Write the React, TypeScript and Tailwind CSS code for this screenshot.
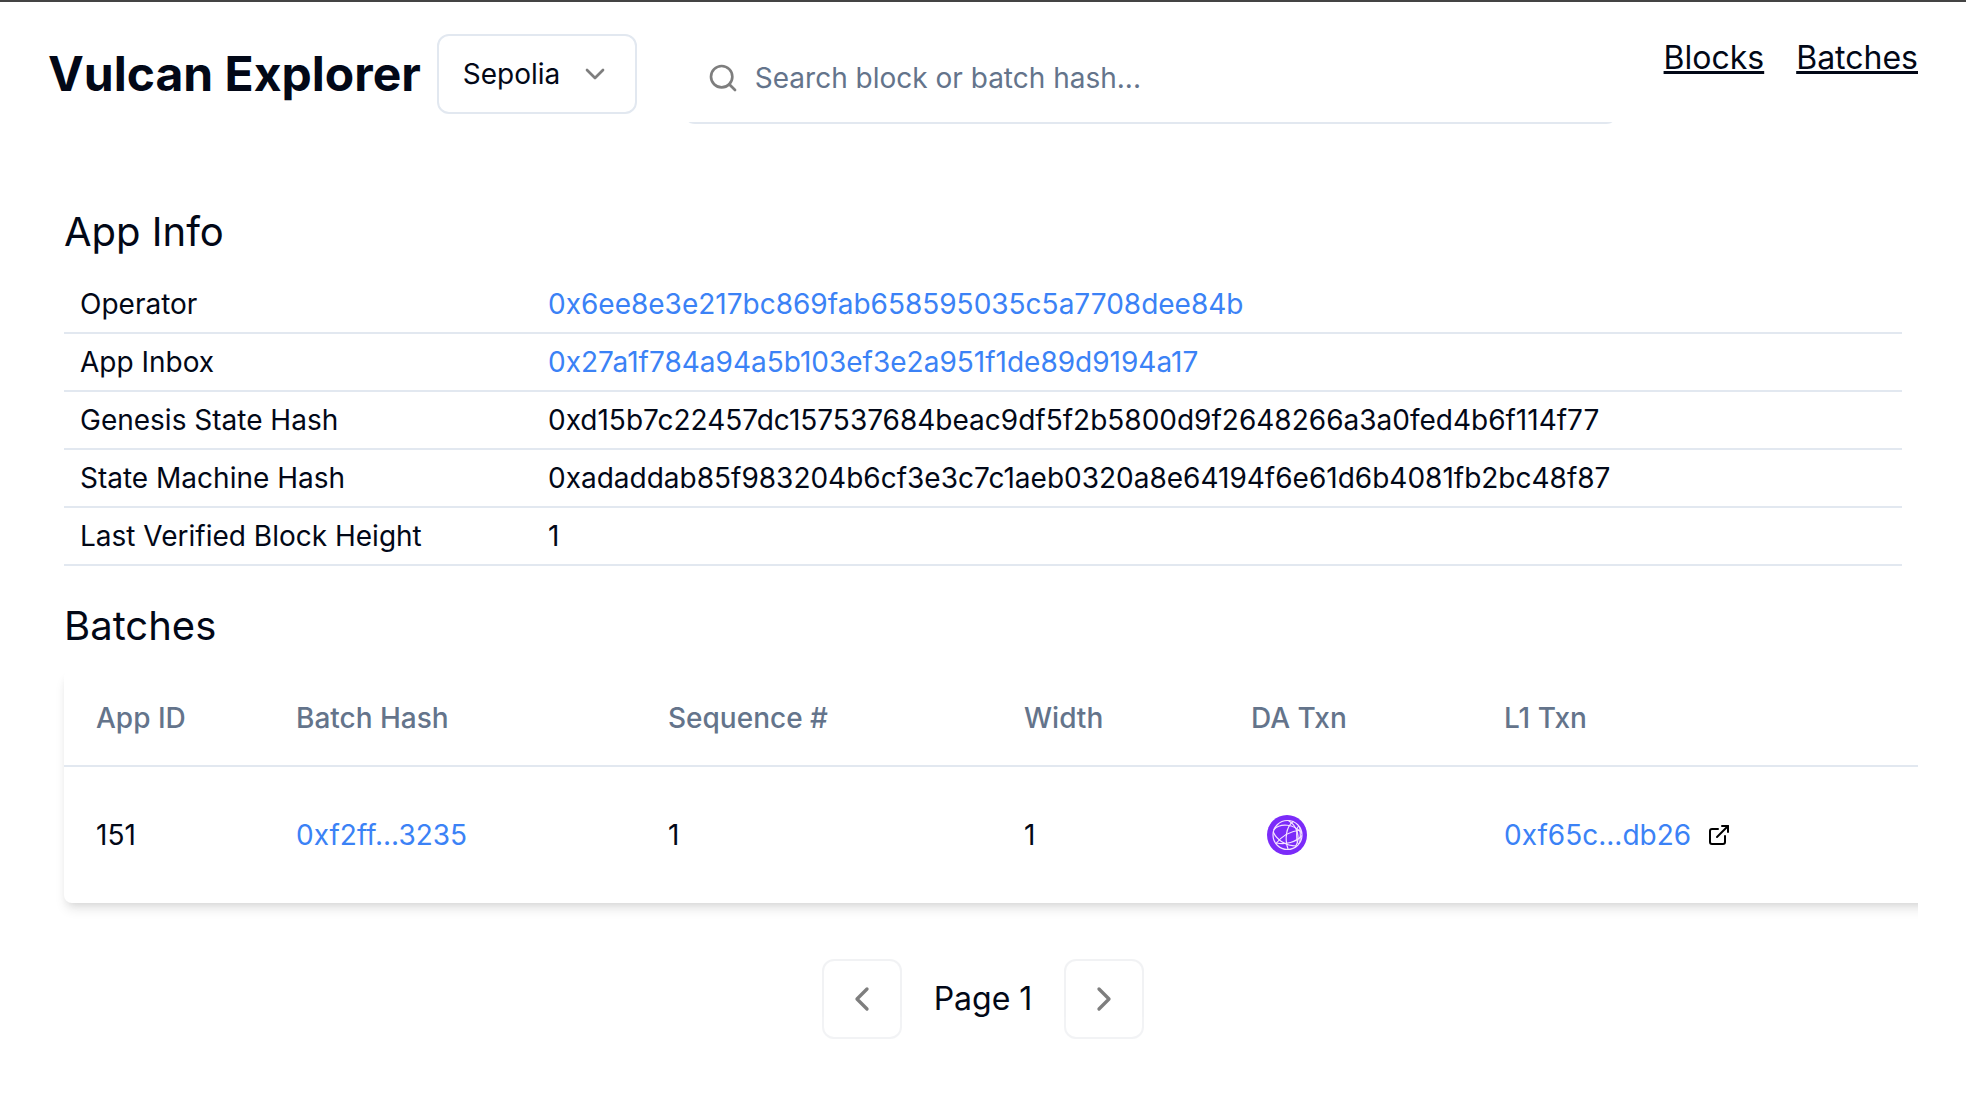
import { ChevronDown, ChevronLeft, ChevronRight, ExternalLink, Search } from "lucide-react";

interface InfoRow {
  label: string;
  value: string;
  href?: string;
}

interface Batch {
  appId: number;
  hash: string;
  sequence: number;
  width: number;
  l1Txn: string;
}

const appInfo: InfoRow[] = [
  { label: "Operator", value: "0x6ee8e3e217bc869fab658595035c5a7708dee84b", href: "#operator" },
  { label: "App Inbox", value: "0x27a1f784a94a5b103ef3e2a951f1de89d9194a17", href: "#inbox" },
  { label: "Genesis State Hash", value: "0xd15b7c22457dc157537684beac9df5f2b5800d9f2648266a3a0fed4b6f114f77" },
  { label: "State Machine Hash", value: "0xadaddab85f983204b6cf3e3c7c1aeb0320a8e64194f6e61d6b4081fb2bc48f87" },
  { label: "Last Verified Block Height", value: "1" },
];

const batches: Batch[] = [
  { appId: 151, hash: "0xf2ff...3235", sequence: 1, width: 1, l1Txn: "0xf65c...db26" },
];

function CelestiaIcon() {
  return (
    <svg viewBox="0 0 40 40" className="size-10" fill="none" aria-hidden="true">
      <circle cx="20" cy="20" r="20" fill="#7b2bf9" />
      <g stroke="#f6e3ff" strokeWidth="1.2" strokeLinecap="round">
        <circle cx="20.5" cy="20" r="14.5" />
        <path d="M7 14.5C13 8 27 8.5 34.5 18" />
        <path d="M26 6.5C19 12 17.5 24 21 34" />
        <path d="M22 6C30 11 34 23 28.5 31.5" />
        <path d="M6.5 17.5C10 25 19 31 29 31" />
        <path d="M9 28.5C15 21 24 16 33.5 15" />
        <path d="M9.5 28C19 30 29 27 34.5 21" />
        <ellipse cx="31.5" cy="20" rx="1.8" ry="8.5" />
      </g>
    </svg>
  );
}

function Header() {
  return (
    <header className="flex items-start px-12 pt-8">
      <div className="flex items-center gap-4">
        <h1 className="text-5xl/[64px] font-bold whitespace-nowrap">Vulcan Explorer</h1>
        <div className="relative">
          <select
            aria-label="Network"
            className="h-20 w-[200px] appearance-none rounded-xl border-2 border-[#e2e8f0] bg-white px-6 text-[28px]/10"
          >
            <option>Sepolia</option>
          </select>
          <ChevronDown className="pointer-events-none absolute top-6 right-[26px] size-8 text-black opacity-50" />
        </div>
      </div>
      <div className="mx-[46px] flex-1 overflow-hidden rounded-xl">
        <label className="flex h-[90px] items-center gap-4 border-b-2 border-[#e2e8f0] px-6">
          <Search className="size-8 shrink-0 text-black opacity-50" />
          <input
            type="text"
            aria-label="Search"
            placeholder="Search block or batch hash..."
            className="min-w-0 flex-1 text-[28px]/10 outline-none placeholder:text-[#64748b]"
          />
        </label>
      </div>
      <nav className="flex gap-8 text-[32px]/[48px]">
        <a href="#blocks" className="underline">Blocks</a>
        <a href="#batches" className="underline">Batches</a>
      </nav>
    </header>
  );
}

function AppInfo() {
  return (
    <section>
      <h2 className="text-[40px]/[56px]">App Info</h2>
      <table className="mt-4 w-full border-collapse text-[28px]/10">
        <tbody>
          {appInfo.map((row) => (
            <tr key={row.label} className="border-b-2 border-[#e2e8f0]">
              <th scope="row" className="w-[468px] px-4 py-2 text-left font-normal">{row.label}</th>
              <td className="px-4 py-2">
                {row.href ? <a href={row.href} className="text-[#3b82f6]">{row.value}</a> : row.value}
              </td>
            </tr>
          ))}
        </tbody>
      </table>
    </section>
  );
}

function Batches() {
  return (
    <section className="mt-8">
      <h2 className="text-[40px]/[56px]">Batches</h2>
      {/* wider than the section, the right edge is cut off by main */}
      <div className="mt-4 w-[calc(100%+64px)] rounded-lg shadow-[0_8px_12px_-2px_rgb(0_0_0/0.1),0_4px_8px_-4px_rgb(0_0_0/0.1)]">
        <table className="w-full table-fixed border-collapse text-[28px]/10">
          <thead>
            <tr className="h-24 border-b-2 border-[#e2e8f0] text-left text-[#64748b]">
              <th className="w-[200px] px-8 font-medium">App ID</th>
              <th className="w-[372px] px-8 font-medium">Batch Hash</th>
              <th className="w-[356px] px-8 font-medium">Sequence #</th>
              <th className="w-[227px] px-8 font-medium">Width</th>
              <th className="w-[253px] px-8 font-medium">DA Txn</th>
              <th className="px-8 font-medium">L1 Txn</th>
            </tr>
          </thead>
          <tbody>
            {batches.map((batch) => (
              <tr key={batch.hash} className="h-[137px]">
                <td className="px-8">{batch.appId}</td>
                <td className="px-8"><a href="#batch" className="text-[#3b82f6]">{batch.hash}</a></td>
                <td className="px-8">{batch.sequence}</td>
                <td className="px-8">{batch.width}</td>
                <td className="px-12">
                  <a href="#da" aria-label="View on Celestia" className="block w-10"><CelestiaIcon /></a>
                </td>
                <td className="px-8">
                  <a href="#l1" className="flex items-center gap-4 text-[#3b82f6]">
                    {batch.l1Txn}
                    <ExternalLink className="size-6 text-black" />
                  </a>
                </td>
              </tr>
            ))}
          </tbody>
        </table>
      </div>
    </section>
  );
}

function Pagination() {
  const button = "flex size-20 items-center justify-center rounded-xl border-2 border-[#e5e7eb] text-black opacity-50";
  return (
    <div className="mt-14 flex items-center justify-center gap-8">
      <button type="button" aria-label="Previous page" disabled className={button}>
        <ChevronLeft className="size-10" />
      </button>
      <span className="text-[32px]/[48px]">Page 1</span>
      <button type="button" aria-label="Next page" disabled className={button}>
        <ChevronRight className="size-10" />
      </button>
    </div>
  );
}

export default function App() {
  return (
    <div className="min-h-screen border-t-2 border-[#444] bg-white font-[Inter,sans-serif] text-[#020817]">
      <Header />
      <main className="mx-12 mt-16 overflow-x-clip px-4 pt-4">
        <AppInfo />
        <Batches />
      </main>
      <Pagination />
    </div>
  );
}
